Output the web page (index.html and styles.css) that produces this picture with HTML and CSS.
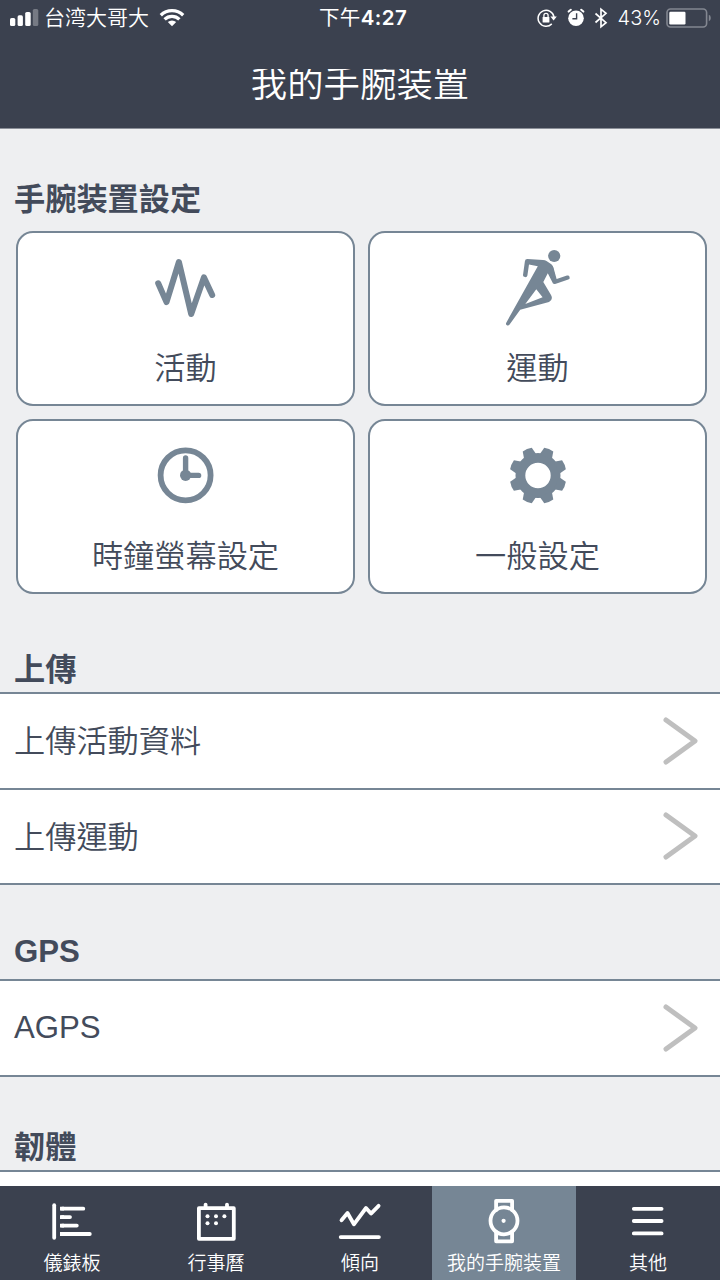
FILE: index.html
```html
<!DOCTYPE html>
<html lang="zh-Hant">

<head>
  <meta charset="utf-8" />
  <meta name="viewport" content="width=device-width, initial-scale=1" />
  <title>我的手腕装置</title>
  <link rel="stylesheet" href="styles.css">
</head>

<body>
  <header class="header">
    <div class="status">
      <div class="status-left">
        <svg class="signal" width="30" height="20" viewBox="0 0 30 20" fill="#fff">
          <rect x="0" y="10" width="5.3" height="8" rx="1.6" />
          <rect x="7.6" y="7.3" width="5.3" height="10.7" rx="1.6" />
          <rect x="15.2" y="4" width="5.5" height="14" rx="1.6" />
          <rect x="22.8" y="1" width="5.5" height="17" rx="1.6" opacity=".3" />
        </svg>
        <span class="carrier">台湾大哥大</span>
        <svg class="wifi" width="26" height="20" viewBox="0 0 26 20" fill="none" stroke="#fff" stroke-width="3.3">
          <path d="M1.8 7.2a16 16 0 0 1 22.4 0" />
          <path d="M5.6 11.4a10.6 10.6 0 0 1 14.8 0" />
          <path d="M13 18.2l-4.2-4.1a6 6 0 0 1 8.4 0z" fill="#fff" stroke="none" />
        </svg>
      </div>
      <div class="time"><span class="ampm">下午</span>4:27</div>
      <div class="status-right">
        <svg width="20" height="20" viewBox="0 0 20 20" fill="none" stroke="#fff" stroke-width="1.5">
          <path d="M14.8 15.9A8 8 0 1 1 17 9" />
          <path d="M13.4 8.5h6.4l-3.2 3.9z" fill="#fff" stroke="none" />
          <rect x="5.6" y="9" width="6.8" height="5.6" rx=".6" fill="#fff" stroke="none" />
          <path d="M6.9 9.4V7.5a2.1 2.1 0 0 1 4.2 0v1.9" stroke-width="1.3" />
        </svg>
        <svg class="alarm" width="18" height="20" viewBox="0 0 18 20">
          <circle cx="9" cy="10.2" r="7.8" fill="#fff" />
          <path d="M1.6 3.6L3.8 1.7M16.4 3.6L14.2 1.7" stroke="#fff" stroke-width="2" stroke-linecap="round" />
          <path d="M9.6 5.3v5.5H5.4" fill="none" stroke="#3b414f" stroke-width="1.4" />
        </svg>
        <svg class="bluetooth" width="14" height="22" viewBox="0 0 14 22" fill="none" stroke="#fff" stroke-width="1.7">
          <path d="M1.5 6.5l10.5 9.2L7 19.8V2.2l5 4.1L1.5 15.5" />
        </svg>
        <span class="percent">43%</span>
        <svg class="battery" width="46" height="20" viewBox="0 0 46 20">
          <rect x="1" y="1" width="39.6" height="18" rx="3.5" fill="none" stroke="#838791" stroke-width="1.6" />
          <rect x="3.3" y="3.7" width="16.2" height="12.8" rx="1.2" fill="#fff" />
          <path d="M42.8 6.8q2 .6 2 3.2t-2 3.2z" fill="#838791" />
        </svg>
      </div>
    </div>
    <h1 class="title">我的手腕装置</h1>
  </header>

  <main class="content">
    <h2 class="heading">手腕装置設定</h2>
    <div class="cards">
      <div class="card">
        <svg class="card-icon" viewBox="0 0 100 100" fill="none" stroke="#768695" stroke-width="6" stroke-linecap="round" stroke-linejoin="round">
          <path d="M22.2 46.3l8.3 18.8L42.9 25 55.2 77l12.7-36.6 8.3 17.6" />
        </svg>
        <span class="label">活動</span>
      </div>
      <div class="card">
        <svg class="card-icon" viewBox="0 0 100 100" fill="#768695">
          <circle cx="66.2" cy="19" r="6.1" />
          <path fill-rule="evenodd" d="M36.9 24.2Q37.1 22 39.5 22.1L55 22.9Q57 23 58.5 24L63 27Q64.6 28.2 65 30L68 43.5 67 47 65 46.5 59.8 36.2 55.3 45 63 58Q65.5 62.5 61 65L32.2 72.8 21.6 87.6Q20.2 89.2 18.6 88 17.4 87 18.4 85.4L49.8 29.2 41 27.6 39.4 38.6Q38.9 40.4 37 40.1 34.9 39.8 35 38zM48.3 52.2L37.3 67 54.6 60.2z" />
          <path d="M63.4 31l3.8 13.8 12.4-4.2" fill="none" stroke="#768695" stroke-width="4.2" stroke-linecap="round" stroke-linejoin="round" />
        </svg>
        <span class="label">運動</span>
      </div>
      <div class="card">
        <svg class="card-icon" viewBox="0 0 100 100" fill="none" stroke="#768695" stroke-width="5.8" stroke-linecap="round">
          <circle cx="49.6" cy="50.3" r="25" />
          <path d="M49.6 33v17.4h13" stroke-width="5.4" />
          <circle cx="49.6" cy="50.3" r="5.6" fill="#768695" stroke="none" />
        </svg>
        <span class="label">時鐘螢幕設定</span>
      </div>
      <div class="card">
        <svg class="card-icon" viewBox="0 0 100 100" fill="#768695">
          <defs>
            <path id="tooth" d="M43.4 30.5L45.1 22.4Q50 21.2 54.9 22.4L56.6 30.5z" />
          </defs>
          <circle cx="50" cy="50.5" r="17.6" fill="none" stroke="#768695" stroke-width="9.8" />
          <use href="#tooth" transform="rotate(22.5 50 50.5)" />
          <use href="#tooth" transform="rotate(67.5 50 50.5)" />
          <use href="#tooth" transform="rotate(112.5 50 50.5)" />
          <use href="#tooth" transform="rotate(157.5 50 50.5)" />
          <use href="#tooth" transform="rotate(202.5 50 50.5)" />
          <use href="#tooth" transform="rotate(247.5 50 50.5)" />
          <use href="#tooth" transform="rotate(292.5 50 50.5)" />
          <use href="#tooth" transform="rotate(337.5 50 50.5)" />
        </svg>
        <span class="label">一般設定</span>
      </div>
    </div>

    <h2 class="heading heading-list">上傳</h2>
    <ul class="list">
      <li class="row">
        <span class="row-text">上傳活動資料</span>
        <svg class="arrow" viewBox="0 0 40 50"><path d="M6 4l29 21L6 46" /></svg>
      </li>
      <li class="row">
        <span class="row-text">上傳運動</span>
        <svg class="arrow" viewBox="0 0 40 50"><path d="M6 4l29 21L6 46" /></svg>
      </li>
    </ul>

    <h2 class="heading heading-gps">GPS</h2>
    <ul class="list">
      <li class="row">
        <span>AGPS</span>
        <svg class="arrow" viewBox="0 0 40 50"><path d="M6 4l29 21L6 46" /></svg>
      </li>
    </ul>

    <h2 class="heading heading-firmware">韌體</h2>
    <ul class="list">
      <li class="row"></li>
    </ul>
  </main>

  <nav class="tabs">
    <a class="tab">
      <svg class="tab-icon" viewBox="0 0 50 50">
        <path d="M7.2 9.2v32.6" />
        <path d="M15 12.7h21.3M15 21.1h8M15 29.6h14.8M15 38h27.8" />
        <path d="M13 12.7h4M13 21.1h4M13 29.6h4M13 38h4" stroke-linecap="butt" />
      </svg>
      <span>儀錶板</span>
    </a>
    <a class="tab">
      <svg class="tab-icon" viewBox="0 0 50 50">
        <rect x="7.9" y="12.2" width="34.9" height="30.6" />
        <path d="M14.6 8.6v3M36 8.6v3" />
        <g fill="#fff" stroke="none">
          <circle cx="16.5" cy="20.2" r="2" />
          <circle cx="25" cy="20.2" r="2" />
          <circle cx="33.4" cy="20.2" r="2" />
          <circle cx="16.5" cy="27.2" r="2" />
          <circle cx="25" cy="27.2" r="2" />
        </g>
      </svg>
      <span>行事曆</span>
    </a>
    <a class="tab">
      <svg class="tab-icon" viewBox="0 0 50 50">
        <path d="M6.5 24.3l6-7.3 6.4 11.3L31 12l5 5.6 7.6-7.8M5.7 41.1h38.2" />
      </svg>
      <span>傾向</span>
    </a>
    <a class="tab active">
      <svg class="tab-icon" viewBox="0 0 50 50">
        <circle cx="25" cy="24.8" r="13.5" />
        <path d="M17.1 14V4.8h16V14M17.1 35.6v9.7h16v-9.7" />
        <circle cx="24.6" cy="24.8" r="2.1" fill="#fff" stroke="none" />
      </svg>
      <span>我的手腕装置</span>
    </a>
    <a class="tab">
      <svg class="tab-icon" viewBox="0 0 50 50">
        <path d="M10.8 12.8h27.8M10.8 25h27.8M10.8 37.4h27.8" />
      </svg>
      <span>其他</span>
    </a>
  </nav>
</body>

</html>
```
FILE: styles.css
```css
* {
  box-sizing: border-box;
}

body {
  display: flex;
  flex-direction: column;
  height: 1280px;
  margin: 0;
  overflow: hidden;
  background-color: #eeeff1;
  color: #434b5b;
  font-family: "Liberation Sans", "Noto Sans CJK TC", sans-serif;
  font-size: 31.2px;
  font-weight: 350;
}

svg {
  display: block;
  flex: none;
}

/* header */
.header {
  flex: none;
  height: 129px;
  background-color: #3b414f;
  border-bottom: 1px solid #8b8f98;
  color: #fff;
}

.status {
  display: grid;
  grid-template-columns: 1fr auto 1fr;
  align-items: center;
  height: 36px;
  padding: 0 8px 0 10px;
  font-family: Inter, "Noto Sans CJK TC", sans-serif;
  font-size: 21px;
  line-height: 36px;
}

.status-left,
.status-right {
  display: flex;
  align-items: center;
}

.status-right {
  justify-content: flex-end;
}

.carrier {
  margin: 0 10px 0 4px;
  font-weight: 350;
}

.time {
  padding-left: 4px;
  font-weight: 600;
  font-size: 20.5px;
  letter-spacing: 0.4px;
}

.ampm {
  font-weight: 400;
}

.alarm {
  margin-left: 10px;
}

.bluetooth {
  margin-left: 9px;
}

.percent {
  margin: 0 5px 0 10px;
  font-size: 20px;
}

.title {
  height: 34px;
  margin: 33px 0 0;
  overflow: hidden;
  font-size: 36.4px;
  font-weight: 350;
  line-height: 32px;
  text-align: center;
}

/* content */
.content {
  flex: 1;
  min-height: 0;
  overflow: hidden;
  background-color: #eeeff1;
}

.heading {
  margin: 0;
  padding: 51px 14px 11px;
  font-size: 31.2px;
  font-weight: 700;
  line-height: 40px;
}

.heading-list {
  padding: 56px 14px 2px;
}

.heading-gps {
  padding: 47px 14px 7px;
}

.heading-firmware {
  padding: 51px 14px 2px;
}

.cards {
  display: grid;
  grid-template-columns: 1fr 1fr;
  gap: 13px;
  padding: 0 13px 0 16px;
}

.card {
  display: flex;
  flex-direction: column;
  align-items: center;
  height: 175px;
  padding-top: 4px;
  background-color: #fff;
  border: 2px solid #768695;
  border-radius: 17px;
}

.card-icon {
  width: 100px;
  height: 100px;
}

.label {
  margin-top: 12px;
  line-height: 40px;
}

.list {
  margin: 0;
  padding: 0;
  list-style: none;
  background-color: #fff;
  border-top: 2px solid #768695;
}

.row {
  display: flex;
  align-items: center;
  justify-content: space-between;
  height: 95.5px;
  padding: 0 20px 0 14px;
  border-bottom: 2px solid #768695;
}

.row-text {
  padding-bottom: 4px;
}

.arrow {
  width: 40px;
  height: 50px;
  fill: none;
  stroke: #bfbfbf;
  stroke-width: 5;
  stroke-linecap: round;
  stroke-linejoin: round;
}

/* bottom tabs */
.tabs {
  display: flex;
  flex: none;
  height: 94px;
  background-color: #3b414f;
}

.tab {
  display: flex;
  flex: 1;
  flex-direction: column;
  align-items: center;
  padding-top: 10px;
  color: #fff;
  font-size: 19px;
  line-height: 36px;
}

.tab.active {
  background-color: #768695;
}

.tab-icon {
  width: 50px;
  height: 50px;
  fill: none;
  stroke: #fff;
  stroke-width: 3.8;
  stroke-linecap: round;
  stroke-linejoin: round;
}
```
